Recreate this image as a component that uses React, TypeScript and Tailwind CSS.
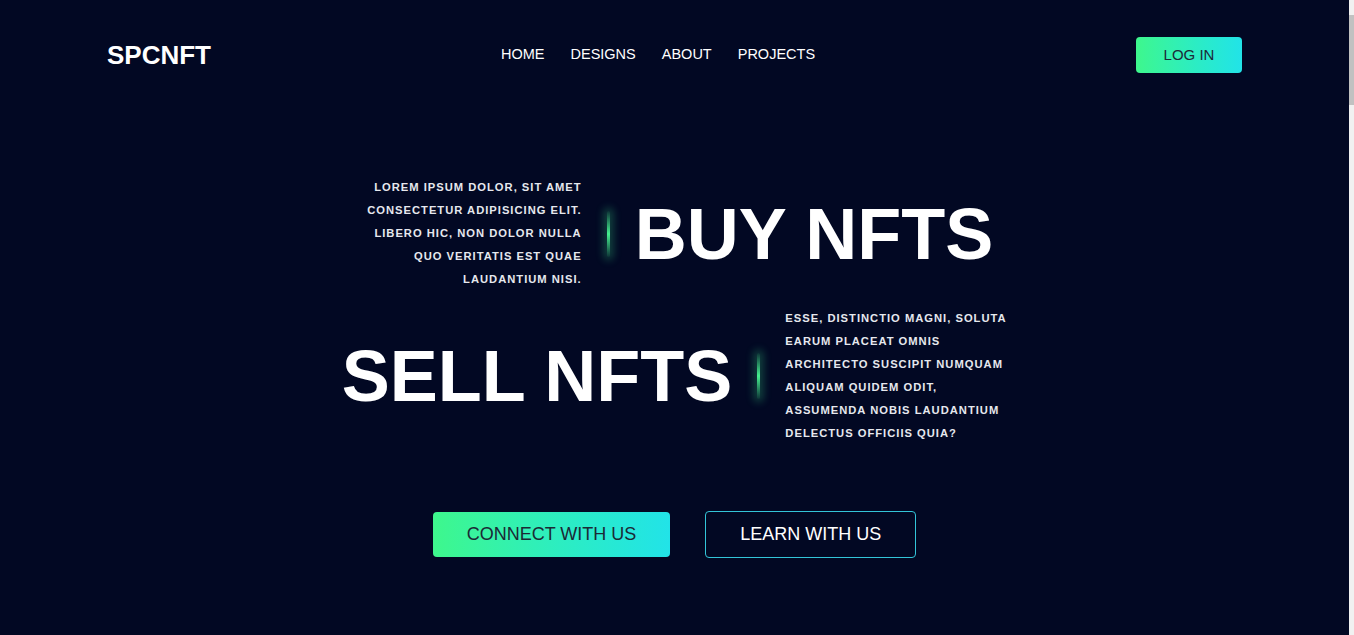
import { useState } from 'react'

const links = ['HOME', 'DESIGNS', 'ABOUT', 'PROJECTS']

function GlowBar() {
  return (
    <div className="w-[3px] h-[46px] shrink-0 rounded-full bg-gradient-to-b from-[#3ee58a]/20 via-[#45f08f] to-[#3ee58a]/20 shadow-[0_0_9px_3px_rgba(62,229,138,0.3)]" />
  )
}

function Blurb({ text, align }: { text: string; align: 'left' | 'right' }) {
  return (
    <p
      className={
        'w-[222px] shrink-0 text-[11.2px] leading-[23px] font-bold tracking-[1px] uppercase text-[#e6e8ee] ' +
        (align === 'right' ? 'text-right' : 'text-left')
      }
    >
      {text}
    </p>
  )
}

export default function App() {
  const [active] = useState('HOME')

  return (
    <div className="h-screen w-full flex bg-[#020823] font-['Liberation_Sans',Arial,sans-serif] text-white overflow-hidden">
      <div className="flex-1 h-full overflow-y-auto [scrollbar-width:none]">

        {/* Navbar */}
        <header className="h-[110px] px-[107px] flex items-center">
          <h1 className="text-[26px] font-bold">SPCNFT</h1>

          <nav className="flex items-center gap-[26px] ml-[290px]">
            {links.map(l => (
              <a key={l} href="#" className={'text-[14.5px] ' + (active === l ? 'text-white' : 'text-white')}>
                {l}
              </a>
            ))}
          </nav>

          <button className="ml-auto w-[106px] h-[36px] rounded-[4px] bg-gradient-to-r from-[#3ef78c] to-[#22e3e8] text-[15px] text-[#1c2a38]">
            LOG IN
          </button>
        </header>

        {/* Hero */}
        <section className="pt-[66px] flex flex-col items-center">
          <div className="flex items-center gap-[25px] ml-[4px]">
            <Blurb
              align="right"
              text="Lorem ipsum dolor, sit amet consectetur adipisicing elit. Libero hic, non dolor nulla quo veritatis est quae laudantium nisi."
            />
            <GlowBar />
            <h2 className="text-[72px] leading-none font-bold">BUY NFTS</h2>
          </div>

          <div className="mt-[16px] flex items-center gap-[25px]">
            <h2 className="text-[72px] leading-none font-bold">SELL NFTS</h2>
            <GlowBar />
            <Blurb
              align="left"
              text="Esse, distinctio magni, soluta earum placeat omnis architecto suscipit numquam aliquam quidem odit, assumenda nobis laudantium delectus officiis quia?"
            />
          </div>

          <div className="mt-[66px] flex items-center gap-[35px]">
            <button className="h-[45px] px-[34px] rounded-[4px] bg-gradient-to-r from-[#3ef78c] to-[#22e3e8] text-[18px] text-[#1b2a35]">
              CONNECT WITH US
            </button>
            <button className="h-[47px] px-[34px] rounded-[4px] border border-[#33c4d8] text-[18px] text-white">
              LEARN WITH US
            </button>
          </div>
        </section>

        <div className="h-[3800px]" />
      </div>

      {/* scrollbar */}
      <div className="w-[5px] h-full bg-[#f1f1f1] pt-[15px]">
        <div className="h-[90px] bg-[#c1c1c1]" />
      </div>
    </div>
  )
}
